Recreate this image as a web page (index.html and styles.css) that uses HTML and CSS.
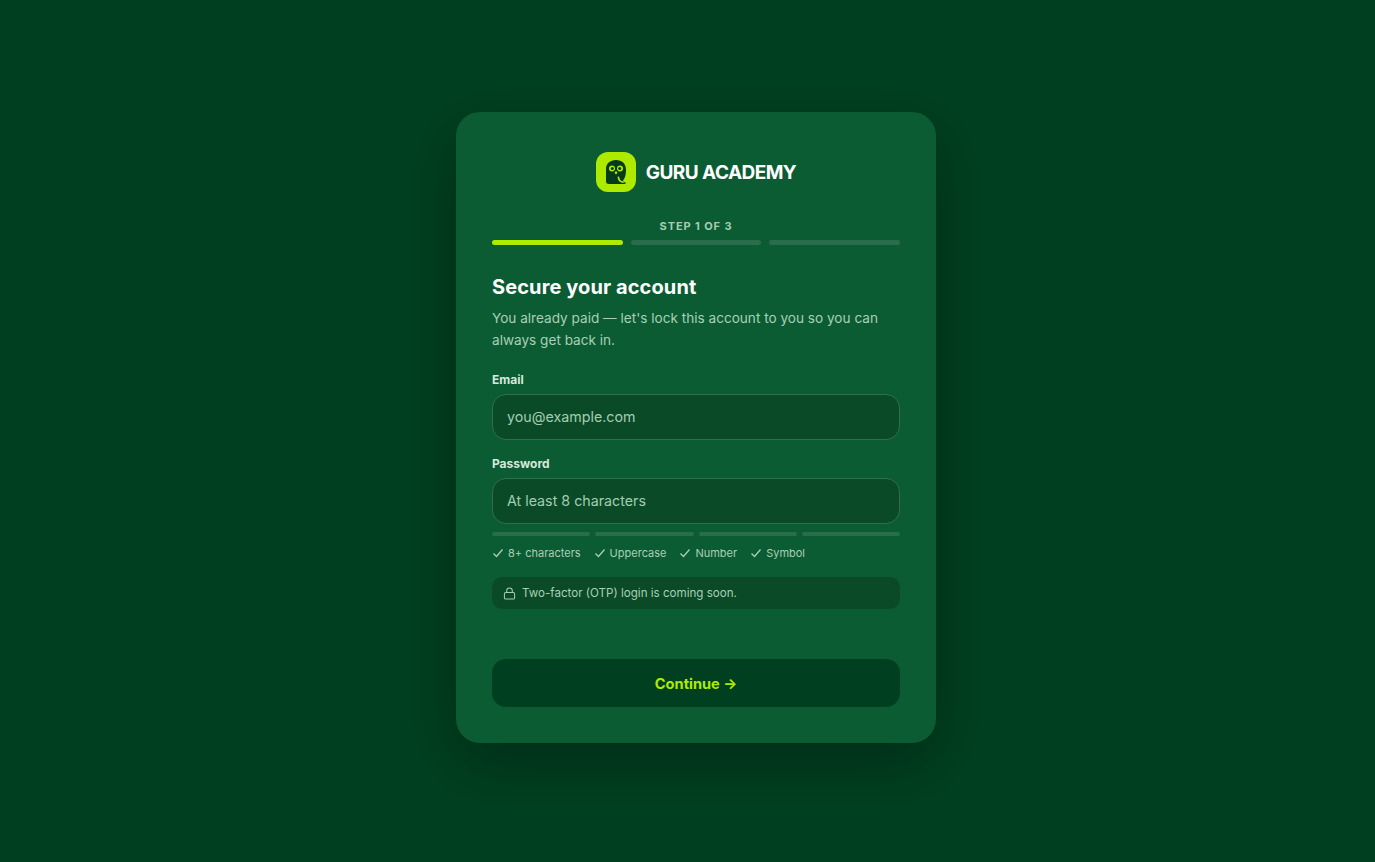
FILE: index.html
```html
<!DOCTYPE html>
<html lang="en">
<head>
    <meta charset="UTF-8">
    <meta name="viewport" content="width=device-width, initial-scale=1.0">
    <title>Guru Academy</title>
    <link rel="stylesheet" href="styles.css">
</head>
<body>
    <main class="card">
        <div class="brand">
            <span class="logo">
                <svg width="24" height="26" viewBox="0 0 24 26">
                    <path d="M12 1C6 1 2 4.500 2 10v12.500C2 24.200 3.300 25 5 25h15c1.500 0 2.200-.5 2-1.200-1.500-.3-2.500-1-3-2.300 2.200-2.600 3-6 3-10.500C22 4.500 18 1 12 1z" fill="#063a1c"/>
                    <circle cx="8" cy="9.500" r="3" fill="#aeea00"/>
                    <circle cx="16" cy="9.500" r="3" fill="#aeea00"/>
                    <circle cx="8.300" cy="9.500" r="1.500" fill="#063a1c"/>
                    <circle cx="15.700" cy="9.500" r="1.500" fill="#063a1c"/>
                    <path d="M12 12l-1.500 1.800 1.500 1.800 1.500-1.800z" fill="#aeea00"/>
                    <path d="M14.500 18.500c.3 2.500 1.800 4.200 4.500 4.700" fill="none" stroke="#aeea00" stroke-width="1.800" stroke-linecap="round"/>
                </svg>
            </span>
            <span class="brand-name">GURU ACADEMY</span>
        </div>

        <div class="step-label">STEP 1 OF 3</div>
        <div class="steps">
            <span class="step active"></span>
            <span class="step"></span>
            <span class="step"></span>
        </div>

        <h1>Secure your account</h1>
        <p class="intro">You already paid — let's lock this account to you so you can always get back in.</p>

        <label class="label" for="email">Email</label>
        <input class="input" id="email" type="email" placeholder="you@example.com">

        <label class="label label-gap" for="password">Password</label>
        <input class="input" id="password" type="password" placeholder="At least 8 characters">

        <div class="strength">
            <span></span>
            <span></span>
            <span></span>
            <span></span>
        </div>

        <ul class="rules">
            <li><svg class="check" viewBox="0 0 12 12"><path d="M1.500 6.500l3 3 6-7"/></svg>8+ characters</li>
            <li><svg class="check" viewBox="0 0 12 12"><path d="M1.500 6.500l3 3 6-7"/></svg>Uppercase</li>
            <li><svg class="check" viewBox="0 0 12 12"><path d="M1.500 6.500l3 3 6-7"/></svg>Number</li>
            <li><svg class="check" viewBox="0 0 12 12"><path d="M1.500 6.500l3 3 6-7"/></svg>Symbol</li>
        </ul>

        <div class="note">
            <svg class="lock" viewBox="0 0 14 14"><rect x="1.500" y="6" width="11" height="7" rx="1.500"/><path d="M4 6V4a3 3 0 0 1 6 0v2"/></svg>
            Two-factor (OTP) login is coming soon.
        </div>

        <button class="continue">Continue →</button>
    </main>
</body>
</html>
```

FILE: styles.css
```css
* { box-sizing: border-box; }
body {
    margin: 0;
    min-height: 100vh;
    padding: 0 0 7px 17px;
    display: flex;
    align-items: center;
    justify-content: center;
    background-color: #004020;
    font-family: Inter, "Noto Sans", sans-serif;
    color: #fff;
}
.card {
    width: 480px;
    height: 631px;
    padding: 40px 36px 36px;
    display: flex;
    flex-direction: column;
    background-color: #0c5c33;
    border-radius: 24px;
    box-shadow: 0 20px 60px rgba(0, 0, 0, 0.3);
}
.brand { display: flex; align-items: center; justify-content: center; gap: 10px; }
.logo {
    width: 40px;
    height: 40px;
    display: flex;
    align-items: center;
    justify-content: center;
    background-color: #aeea00;
    border-radius: 12px;
}
.brand-name { font-size: 19px; font-weight: 700; letter-spacing: -0.55px; }
.step-label {
    margin-top: 26px;
    text-align: center;
    font-size: 11px;
    line-height: 16px;
    font-weight: 700;
    letter-spacing: 0.9px;
    color: #a3cdb3;
}
.steps { display: flex; gap: 8px; margin-top: 6px; }
.step { flex: 1; height: 5px; border-radius: 3px; background-color: #2a6d4c; }
.step.active { background-color: #aeea00; }
h1 { margin: 28px 0 0; font-size: 20px; line-height: 28px; font-weight: 700; letter-spacing: 0.1px; }
.intro { margin: 6px 0 0; font-size: 13.6px; line-height: 22px; color: #a9cfb7; }
.label { display: block; margin-top: 21px; margin-bottom: 6px; font-size: 12px; line-height: 16px; font-weight: 700; color: #d6e8dc; }
.label-gap { margin-top: 16px; }
.input {
    width: 100%;
    height: 46px;
    padding: 0 14px 2px;
    background-color: #0a4a26;
    border: 1px solid #2f6f4e;
    border-radius: 14px;
    font-family: inherit;
    font-size: 14.25px;
    color: #fff;
    outline: none;
}
.input::placeholder { color: #a3cdb3; opacity: 1; }
.strength { display: flex; gap: 5px; margin-top: 8px; }
.strength span { flex: 1; height: 4px; border-radius: 2px; background-color: #2a6d4c; }
.rules {
    display: flex;
    gap: 13px;
    margin: 9px 0 0;
    padding: 0;
    list-style: none;
    font-size: 11px;
    line-height: 16px;
    color: #a9cfb7;
}
.rules li { display: flex; align-items: center; gap: 4px; }
.check { width: 12px; height: 12px; fill: none; stroke: #a9cfb7; stroke-width: 1.300; }
.note {
    display: flex;
    align-items: center;
    gap: 6px;
    height: 32px;
    margin-top: 16px;
    padding: 0 11px;
    background-color: #0a4a26;
    border-radius: 10px;
    font-size: 11.6px;
    color: #a9cfb7;
}
.lock { width: 13px; height: 13px; fill: none; stroke: #a9cfb7; stroke-width: 1.100; }
.continue {
    height: 48px;
    margin-top: auto;
    padding-top: 3px;
    background-color: #004020;
    border: none;
    border-radius: 14px;
    font-family: inherit;
    font-size: 14.6px;
    font-weight: 700;
    color: #aeea00;
}
```
